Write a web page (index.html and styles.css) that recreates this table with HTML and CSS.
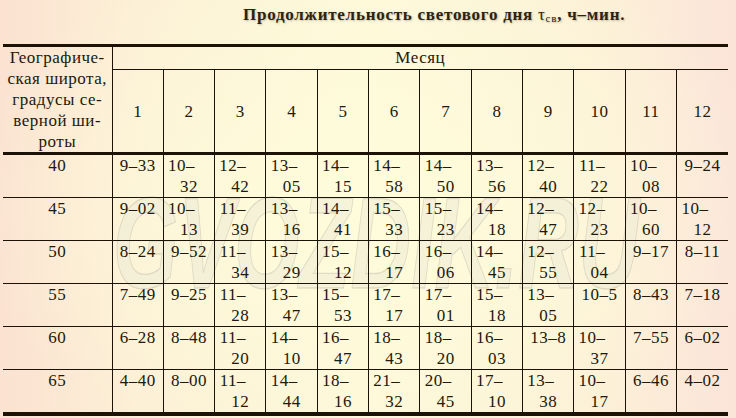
FILE: index.html
```html
<!DOCTYPE html>
<html lang="ru">
<head>
<meta charset="utf-8">
<title>Продолжительность светового дня</title>
<link rel="stylesheet" href="styles.css">
</head>
<body>
<div class="page">
  <h1 class="title">Продолжительность светового дня <span class="tau">τ</span><span class="sub">св</span>, ч–мин.</h1>
  <div class="wrap">
    <div class="wm">GVOZDIK.RU</div>
    <table class="tbl">
      <colgroup>
        <col class="c-lat">
        <col><col><col><col><col><col><col><col><col><col><col><col>
      </colgroup>
      <thead>
        <tr class="r1">
          <th rowspan="2" class="lat">Географиче-<br>ская широта,<br>градусы се-<br>верной ши-<br>роты</th>
          <th colspan="12" class="month">Месяц</th>
        </tr>
        <tr class="r2">
          <th>1</th><th>2</th><th>3</th><th>4</th><th>5</th><th>6</th><th>7</th><th>8</th><th>9</th><th>10</th><th>11</th><th>12</th>
        </tr>
      </thead>
      <tbody>
        <tr>
          <td>40</td><td>9–33</td>
          <td><span class="w">10–</span><br>32</td>
          <td><span class="w">12–</span><br>42</td>
          <td><span class="w">13–</span><br>05</td>
          <td><span class="w">14–</span><br>15</td>
          <td><span class="w">14–</span><br>58</td>
          <td><span class="w">14–</span><br>50</td>
          <td><span class="w">13–</span><br>56</td>
          <td><span class="w">12–</span><br>40</td>
          <td><span class="w">11–</span><br>22</td>
          <td><span class="w">10–</span><br>08</td>
          <td>9–24</td>
        </tr>
        <tr>
          <td>45</td><td>9–02</td>
          <td><span class="w">10–</span><br>13</td>
          <td><span class="w">11–</span><br>39</td>
          <td><span class="w">13–</span><br>16</td>
          <td><span class="w">14–</span><br>41</td>
          <td><span class="w">15–</span><br>33</td>
          <td><span class="w">15–</span><br>23</td>
          <td><span class="w">14–</span><br>18</td>
          <td><span class="w">12–</span><br>47</td>
          <td><span class="w">12–</span><br>23</td>
          <td><span class="w">10–</span><br>60</td>
          <td><span class="w">10–</span><br>12</td>
        </tr>
        <tr>
          <td>50</td><td>8–24</td><td>9–52</td>
          <td><span class="w">11–</span><br>34</td>
          <td><span class="w">13–</span><br>29</td>
          <td><span class="w">15–</span><br>12</td>
          <td><span class="w">16–</span><br>17</td>
          <td><span class="w">16–</span><br>06</td>
          <td><span class="w">14–</span><br>45</td>
          <td><span class="w">12–</span><br>55</td>
          <td><span class="w">11–</span><br>04</td>
          <td>9–17</td><td>8–11</td>
        </tr>
        <tr>
          <td>55</td><td>7–49</td><td>9–25</td>
          <td><span class="w">11–</span><br>28</td>
          <td><span class="w">13–</span><br>47</td>
          <td><span class="w">15–</span><br>53</td>
          <td><span class="w">17–</span><br>17</td>
          <td><span class="w">17–</span><br>01</td>
          <td><span class="w">15–</span><br>18</td>
          <td><span class="w">13–</span><br>05</td>
          <td>10–5</td><td>8–43</td><td>7–18</td>
        </tr>
        <tr>
          <td>60</td><td>6–28</td><td>8–48</td>
          <td><span class="w">11–</span><br>20</td>
          <td><span class="w">14–</span><br>10</td>
          <td><span class="w">16–</span><br>47</td>
          <td><span class="w">18–</span><br>43</td>
          <td><span class="w">18–</span><br>20</td>
          <td><span class="w">16–</span><br>03</td>
          <td>13–8</td>
          <td><span class="w">10–</span><br>37</td>
          <td>7–55</td><td>6–02</td>
        </tr>
        <tr class="last">
          <td>65</td><td>4–40</td><td>8–00</td>
          <td><span class="w">11–</span><br>12</td>
          <td><span class="w">14–</span><br>44</td>
          <td><span class="w">18–</span><br>16</td>
          <td><span class="w">21–</span><br>32</td>
          <td><span class="w">20–</span><br>45</td>
          <td><span class="w">17–</span><br>10</td>
          <td><span class="w">13–</span><br>38</td>
          <td><span class="w">10–</span><br>17</td>
          <td>6–46</td><td>4–02</td>
        </tr>
      </tbody>
    </table>
  </div>
</div>
</body>
</html>
```

FILE: styles.css
```css
html, body {
  margin: 0;
  padding: 0;
}
body {
  width: 736px;
  height: 418px;
  overflow: hidden;
  font-family: "Liberation Serif", "Times New Roman", serif;
  color: #22190c;
  background-color: #fdf7d9;
  background-image:
    radial-gradient(ellipse 55% 65% at 50% 48%, rgba(254, 252, 219, 1) 0%, rgba(254, 252, 219, 0) 100%),
    linear-gradient(90deg, #fbe2d1 0%, #fcefd6 18%, #fdf8d9 50%, #fcf0d7 82%, #fbe4d9 100%);
}
.page {
  position: relative;
  width: 736px;
  height: 418px;
}
.title {
  margin: 0;
  height: 44px;
  box-sizing: border-box;
  padding: 5px 0 0 243px;
  font-family: "Liberation Serif", "Times New Roman", serif;
  font-size: 17px;
  line-height: 20px;
  font-weight: bold;
  letter-spacing: 0.75px;
  color: #2b2414;
  text-shadow: 1px 1px 2px rgba(60, 50, 20, 0.28);
  white-space: nowrap;
}
.tau {
  font-weight: normal;
  font-size: 17px;
}
.sub {
  font-size: 11px;
  font-weight: normal;
  vertical-align: -2px;
}
.wrap {
  position: relative;
  padding-left: 3px;
}
.wm {
  position: absolute;
  left: 113px;
  top: 134px;
  font-family: "Liberation Sans", Arial, sans-serif;
  font-weight: bold;
  font-style: italic;
  font-size: 130px;
  line-height: 1;
  white-space: nowrap;
  color: rgba(236, 233, 214, 0.5);
  -webkit-text-stroke: 1.3px rgba(160, 155, 140, 0.28);
  transform: scaleX(0.645);
  transform-origin: left top;
  z-index: 0;
  pointer-events: none;
}
.tbl {
  position: relative;
  z-index: 1;
  width: 725px;
  table-layout: fixed;
  border-collapse: collapse;
  border-top: 3px solid #1c1206;
  font-family: "Liberation Serif", "Times New Roman", serif;
  font-size: 17px;
  line-height: 21px;
  letter-spacing: 0.5px;
}
.c-lat {
  width: 109px;
}
.tbl th,
.tbl td {
  padding: 0;
  text-align: center;
  font-weight: normal;
  color: #22190c;
}
.tbl th + th,
.tbl td + td {
  border-left: 1px solid #1c1206;
}
.r2 th {
  border-left: 1px solid #1c1206;
  height: 82px;
  vertical-align: middle;
}
.r1 th {
  height: 22px;
}
.r1 .lat {
  vertical-align: top;
  border-left: none;
  border-right: 1px solid #1c1206;
  border-bottom: 3px solid #1c1206;
}
.r1 .month {
  border-bottom: 1px solid #1c1206;
  vertical-align: top;
}
thead .r2 th {
  border-bottom: 3px solid #1c1206;
}
.tbl tbody td {
  height: 42px;
  vertical-align: top;
  border-bottom: 1px solid #1c1206;
}
.tbl tbody tr.last td {
  border-bottom: 4px solid #1c1206;
}
.w {
  padding-right: 15px;
}
```
